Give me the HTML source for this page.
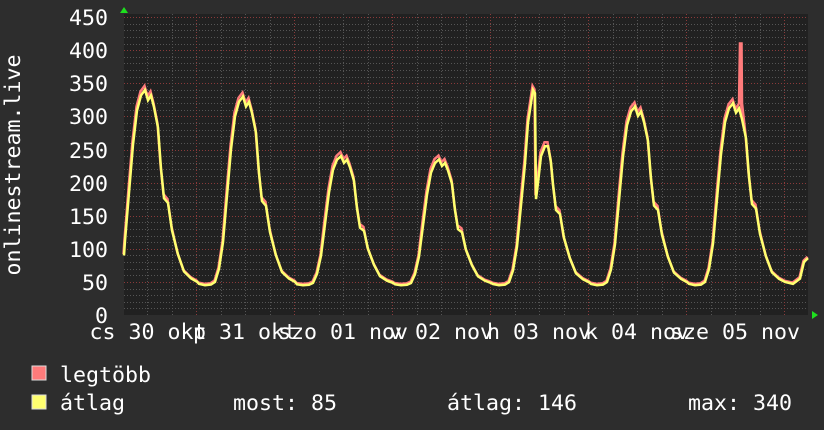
<!DOCTYPE html>
<html><head><meta charset="utf-8"><style>
html,body{margin:0;padding:0;background:#2d2d2d;width:824px;height:430px;overflow:hidden}
text{font-family:"DejaVu Sans Mono","Liberation Mono",monospace;fill:#fff;font-size:21.6px}
</style></head><body>
<svg id="s" width="824" height="430" xmlns="http://www.w3.org/2000/svg">
<rect x="124" y="14" width="684" height="301" fill="#212121"/>
<g id="grid"></g>
<polyline id="pk" fill="none" stroke="#ff7b7b" stroke-width="2.5"/>
<polyline id="yl" fill="none" stroke="#ffff70" stroke-width="2.5"/>
<polygon points="120,13 128,13 124,7" fill="#1ee01e"/>
<polygon points="812,311 812,319 818,315" fill="#1ee01e"/>
<g text-anchor="end">
<text x="108" y="25">450</text><text x="108" y="58">400</text><text x="108" y="91">350</text>
<text x="108" y="124">300</text><text x="108" y="158">250</text><text x="108" y="191">200</text>
<text x="108" y="224">150</text><text x="108" y="257">100</text><text x="108" y="290">50</text>
<text x="108" y="323">0</text></g>
<text transform="translate(20,165) rotate(-90)" text-anchor="middle">onlinestream.live</text>
<g text-anchor="middle">
<text x="148" y="339">cs 30 okt</text><text x="245" y="339">p 31 okt</text>
<text x="343" y="339">szo 01 nov</text><text x="441" y="339">v 02 nov</text>
<text x="539" y="339">h 03 nov</text><text x="637" y="339">k 04 nov</text>
<text x="735" y="339">sze 05 nov</text></g>
<rect x="32" y="366" width="14" height="14" fill="#ff7b7b" stroke="#ddd" stroke-width="1"/>
<rect x="32" y="395" width="14" height="14" fill="#ffff70" stroke="#ddd" stroke-width="1"/>
<text x="60" y="382">legtöbb</text>
<text x="60" y="410">átlag</text>
<text x="233" y="410">most: 85</text>
<text x="447" y="410">átlag: 146</text>
<text x="688" y="410">max: 340</text>
</svg>
<script>
var NS="http://www.w3.org/2000/svg",g=document.getElementById("grid");
function ln(x1,y1,x2,y2,c){var l=document.createElementNS(NS,"line");l.setAttribute("x1",x1);l.setAttribute("y1",y1);l.setAttribute("x2",x2);l.setAttribute("y2",y2);l.setAttribute("stroke",c);l.setAttribute("stroke-width","1");l.setAttribute("stroke-dasharray","1,2");g.appendChild(l);}
function Y(v){return 315-v*0.662;}
for(var v=10;v<=450;v+=10){var y=Math.round(Y(v))+0.5;ln(124,y,808,y,v%50==0?"#8a3a3a":"#555");}
for(var x=196-98;x<808;x+=24.5){if(x<=124)continue;var xx=Math.round(x)+0.5;var major=Math.abs(((x-196)%98+98)%98)<1;ln(xx,14,xx,315,major?"#8a3a3a":"#555");}
var T=[[-12,50],[-6,47],[0,45],[6,46],[10,50],[14,70],[18,110],[22,180],[26,250],[30,300],[34,322],[38,330],[41,315],[44,322],[47,305],[51,275],[54,215],[57,172],[61,165],[65,125],[71,90],[77,65],[84,55],[90,50],[98,47]];
var days=[[107,340],[205,330],[303,240],[401,235],[499,300],[597,315],[695,320]];
var pts=[];
days.forEach(function(d,i){T.forEach(function(p,j){if(j==0&&i>0)return;if(j==T.length-1&&i<days.length-1)return;var v=45+(p[1]-45)*(d[1]-45)/285;pts.push([d[0]+p[0],v]);});});
pts.push([800,55]);pts.push([804,80]);pts.push([808,86]);
pts=pts.filter(function(p){return p[0]>=124&&p[0]<=808;});
pts.unshift([124,90]);
pts.sort(function(a,b){return a[0]-b[0]});
pts=pts.filter(function(p){return !(p[0]>527&&p[0]<552)});
pts.push([528,290],[531,320],[533,340],[535,335],[536,175],[538,200],[541,240],[545,255],[548,255],[551,230]);
pts.sort(function(a,b){return a[0]-b[0]});
var ys="",ps="";
pts.forEach(function(p){ys+=p[0]+","+Y(p[1]).toFixed(1)+" ";var pv=p[1]+(p[1]>120?6:2);ps+=(p[0]-0.5)+","+Y(pv).toFixed(1)+" ";});
var pk2=ps.split(" ").filter(Boolean).map(function(s){return s.split(",").map(Number)});
pk2.push([739,Y(320)],[740,Y(412)],[741.5,Y(412)],[742,Y(320)]);
pk2.sort(function(a,b){return a[0]-b[0]});
document.getElementById("pk").setAttribute("points",pk2.map(function(p){return p.join(",")}).join(" "));
document.getElementById("yl").setAttribute("points",ys);
</script>
</body></html>
